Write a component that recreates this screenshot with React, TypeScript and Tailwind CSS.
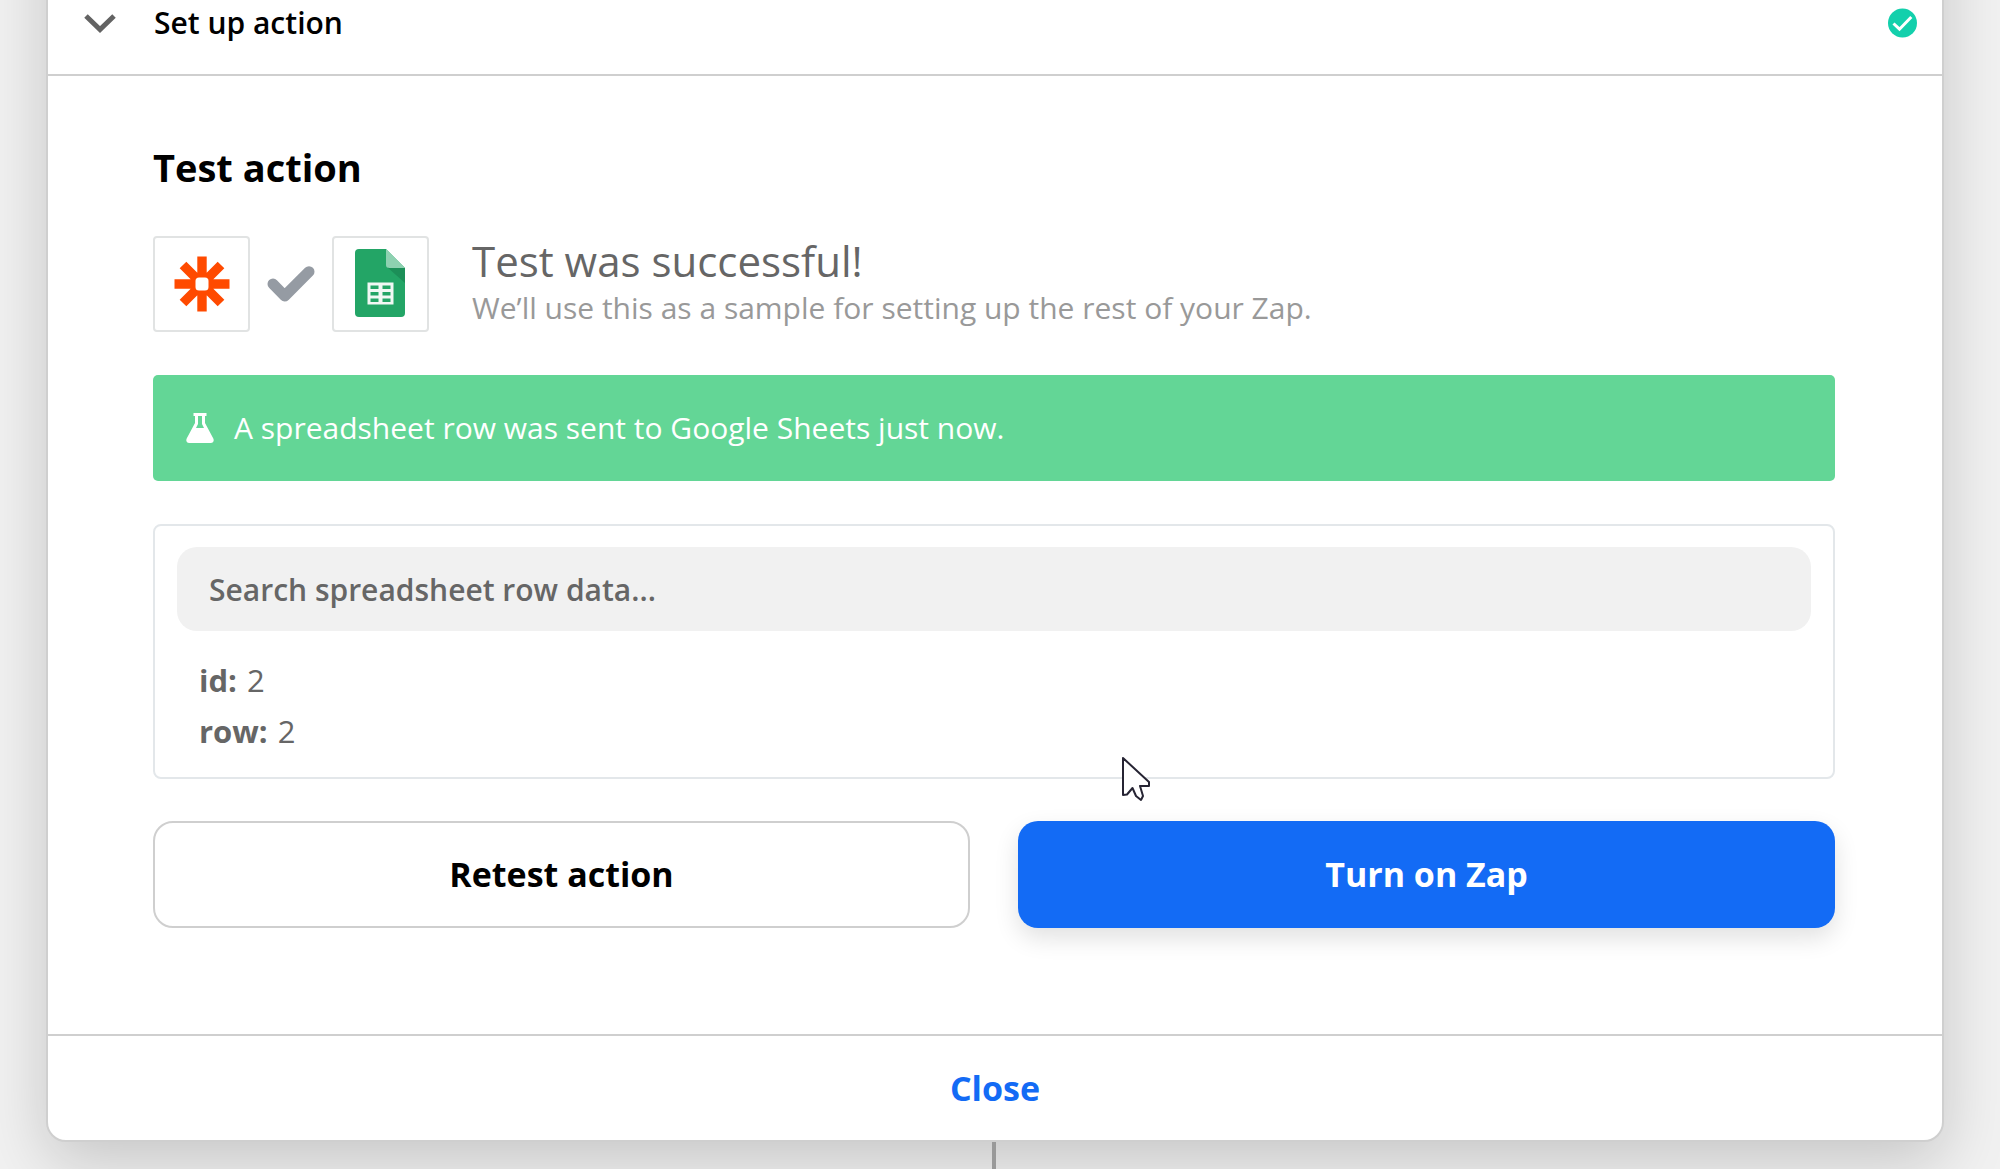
import React from "react";

const rows = [
  { label: "id", value: "2" },
  { label: "row", value: "2" },
];

const ChevronIcon = () => (
  <svg width="32" height="20" viewBox="0 0 32 20" fill="none" aria-hidden="true">
    <path d="M2 3 L16 16.5 L30 3" stroke="#636363" strokeWidth="5" />
  </svg>
);

const StatusIcon = () => (
  <svg width="29" height="30" viewBox="0 0 29 30" fill="none" aria-hidden="true">
    <circle cx="14.5" cy="15" r="14.5" fill="#13d0ac" />
    <path d="M5.5 15.5 L11.5 21.2 L23.3 9" stroke="#fff" strokeWidth="3" />
  </svg>
);

const ZapierIcon = () => (
  <svg width="56" height="56" viewBox="0 0 56 56" aria-hidden="true">
    <g stroke="#ff4a00" strokeWidth="9.4">
      <path d="M28 0.5V55.5M0.5 28H55.5M9 9L47 47M47 9L9 47" />
    </g>
    <rect x="21.5" y="21.5" width="13" height="13" rx="3.5" fill="#fff" />
  </svg>
);

const CheckIcon = () => (
  <svg width="48" height="36" viewBox="0 0 48 36" fill="none" aria-hidden="true">
    <path
      d="M6 18 L17.7 30 L42 5.7"
      stroke="#959ba3"
      strokeWidth="11"
      strokeLinecap="round"
      strokeLinejoin="round"
    />
  </svg>
);

const SheetsIcon = () => (
  <svg width="52" height="70" viewBox="0 0 52 70" aria-hidden="true">
    <path d="M4 0H31L50 19V64a4 4 0 0 1-4 4H4a4 4 0 0 1-4-4V4a4 4 0 0 1 4-4Z" fill="#23a566" />
    <path d="M31 0L50 19H34a3 3 0 0 1-3-3Z" fill="#8ed1b1" />
    <path d="M32.5 18.5L50 34V19H34Z" fill="#1c8f58" />
    <rect x="12.5" y="33.5" width="26" height="22" fill="#f1f8f4" />
    <path
      d="M15.5 36.5h8v3.5h-8zM27.5 36.5h8v3.5h-8zM15.5 43h8v3.5h-8zM27.5 43h8v3.5h-8zM15.5 49.5h8v3.5h-8zM27.5 49.5h8v3.5h-8z"
      fill="#23a566"
    />
  </svg>
);

const FlaskIcon = () => (
  <svg width="28" height="32" viewBox="0 0 28 32" aria-hidden="true">
    <path
      fill="#fff"
      fillRule="evenodd"
      d="M7.5 1H20.5V4H19V11L27.3 26.5C28.4 29 27.2 31 24.8 31H3.2C0.8 31 -0.4 29 0.7 26.5L9 11V4H7.5ZM12 4V12L10 16H18L16 12V4Z"
    />
  </svg>
);

const CursorIcon = () => (
  <svg width="30" height="48" viewBox="0 0 30 48" aria-hidden="true">
    <path
      d="M2 2 V39 L6 38.5 L11.5 32 L15 40 L20 44 L22 40 L19 30 H28 V26 Z"
      fill="#fff"
      stroke="#262433"
      strokeWidth="2"
      strokeLinejoin="round"
    />
  </svg>
);

const AppTile = ({ children }: { children: React.ReactNode }) => (
  <div className="flex h-24 w-[97px] items-center justify-center rounded-sm border-2 border-[#e1e3e3] bg-white">
    {children}
  </div>
);

const App = () => {
  return (
    <div className="min-h-screen overflow-hidden bg-[#f1f1f1] font-['Open_Sans',sans-serif]">
      <main className="mr-14 ml-[46px] -mt-24 rounded-[20px] border-2 border-[#cfcfcf] bg-white pt-24 shadow-[0_20px_64px_rgba(0,0,0,0.18)]">
        <header className="flex h-[74px] items-start justify-between border-b-2 border-[#cfcfcf] pr-[25px] pl-9">
          <button type="button" className="flex items-center gap-[38px] text-left">
            <ChevronIcon />
            <span className="text-[30px] leading-[42px] font-semibold text-black">Set up action</span>
          </button>
          <div className="pt-[6px]">
            <StatusIcon />
          </div>
        </header>

        <section className="pt-[65px] pr-[107px] pb-[106px] pl-[105px]">
          <h1 className="text-[38px] leading-[52px] font-bold text-black">Test action</h1>

          <div className="mt-[43px] flex items-center">
            <div className="flex items-center gap-[17px]">
              <AppTile>
                <ZapierIcon />
              </AppTile>
              <CheckIcon />
              <AppTile>
                <SheetsIcon />
              </AppTile>
            </div>
            <div className="ml-[43px] pb-[2px]">
              <h2 className="text-[42px] leading-[50px] text-[#666]">Test was successful!</h2>
              <p className="text-[30px] leading-[44px] text-[#999]">
                We’ll use this as a sample for setting up the rest of your Zap.
              </p>
            </div>
          </div>

          <div className="mt-[43px] flex h-[106px] items-center gap-5 rounded-[5px] bg-[#63d696] pl-[33px] text-white">
            <FlaskIcon />
            <p className="text-[30px] leading-[44px]">A spreadsheet row was sent to Google Sheets just now.</p>
          </div>

          <div className="relative mt-[43px] rounded-lg border-2 border-[#e3e7ea] px-[22px] pt-[21px] pb-5">
            <input
              type="text"
              aria-label="Search spreadsheet row data"
              placeholder="Search spreadsheet row data..."
              className="block h-[84px] w-full rounded-[20px] bg-[#f1f1f1] px-8 text-[30px] font-semibold placeholder:text-[#666] placeholder:opacity-100"
            />
            <dl className="mt-6 pl-[22px] text-[31px] leading-[51px] text-[#666]">
              {rows.map((row) => (
                <div key={row.label} className="flex gap-[10px]">
                  <dt className="font-bold">{row.label}:</dt>
                  <dd>{row.value}</dd>
                </div>
              ))}
            </dl>
            <div className="pointer-events-none absolute -bottom-[27px] left-[966px]">
              <CursorIcon />
            </div>
          </div>

          <div className="mt-[42px] grid grid-cols-2 gap-12">
            <button
              type="button"
              className="h-[107px] rounded-[20px] border-2 border-[#cfcfcf] bg-white text-[34px] font-bold text-black"
            >
              Retest action
            </button>
            <button
              type="button"
              className="h-[107px] rounded-[20px] bg-[#136bf5] text-[34px] font-bold text-white shadow-[0_10px_24px_rgba(0,0,0,0.12)]"
            >
              Turn on Zap
            </button>
          </div>
        </section>

        <footer className="border-t-2 border-[#cfcfcf]">
          <button type="button" className="h-[104px] w-full text-[34px] font-bold text-[#136bf5]">
            Close
          </button>
        </footer>
      </main>
      <div className="mr-[58px] ml-[46px] flex justify-center">
        <div className="relative h-[29px] w-1 bg-[#999]" />
      </div>
    </div>
  );
};

export default App;
